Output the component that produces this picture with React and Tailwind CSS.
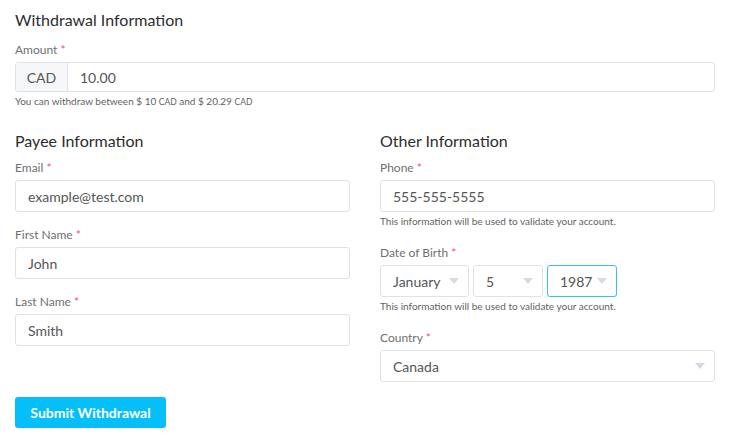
import React from 'react';

const Label = ({ children }) => (
  <div className="h-[16px] text-[12px] leading-[16px] text-[#6f6f73] mb-[4px]">
    {children} <span className="text-[#f0506e]">*</span>
  </div>
);

const TextInput = ({ value }) => (
  <div className="h-[32px] border border-[#dde1ea] rounded-[3px] bg-white px-[12px] flex items-center text-[14px] text-[#555]">
    {value}
  </div>
);

const Caret = () => (
  <svg width="12" height="8" viewBox="0 0 12 8" className="shrink-0">
    <path d="M1 1h10L6 7z" fill="#d6dae3" />
  </svg>
);

const Select = ({ value, className = '', focused = false }) => (
  <div
    className={`h-[32px] border rounded-[3px] bg-white pl-[12px] pr-[8px] flex items-center justify-between text-[14px] text-[#555] ${
      focused ? 'border-[#2ec4f4]' : 'border-[#dde1ea]'
    } ${className}`}
  >
    <span>{value}</span>
    <Caret />
  </div>
);

const Help = ({ children }) => (
  <div className="text-[10px] leading-[14px] text-[#5f5f63] mt-[2px]">{children}</div>
);

export default function App() {
  return (
    <div
      className="w-[740px] h-[443px] bg-white px-[15px] pt-[9px]"
      style={{ fontFamily: 'Lato, "Open Sans", sans-serif' }}
    >
      <div className="w-[700px]">
        {/* Withdrawal */}
        <h2 className="text-[16px] leading-[22px] text-[#2d2d30] mb-[11px]">Withdrawal Information</h2>
        <Label>Amount</Label>
        <div className="h-[30px] flex border border-[#dde1ea] rounded-[3px] text-[14px] text-[#555]">
          <div className="w-[52px] bg-[#f6f7f9] border-r border-[#dde1ea] flex items-center justify-center">CAD</div>
          <div className="flex items-center px-[12px]">10.00</div>
        </div>
        <div className="text-[10px] leading-[14px] text-[#5f5f63] mt-[2px]">
          You can withdraw between $ 10 <span className="text-[8.5px]">CAD</span> and $ 20.29 <span className="text-[8.5px]">CAD</span>
        </div>

        <div className="grid grid-cols-2 gap-[30px] mt-[21px]">
          {/* Payee */}
          <div>
            <h2 className="text-[16px] leading-[22px] text-[#2d2d30] mb-[8px]">Payee Information</h2>
            <Label>Email</Label>
            <TextInput value="example@test.com" />
            <div className="mt-[15px]">
              <Label>First Name</Label>
              <TextInput value="John" />
            </div>
            <div className="mt-[15px]">
              <Label>Last Name</Label>
              <TextInput value="Smith" />
            </div>
            <button className="mt-[51px] w-[151px] h-[31px] rounded-[3px] bg-[#06bff8] text-white text-[14px] font-bold">
              Submit Withdrawal
            </button>
          </div>

          {/* Other */}
          <div>
            <h2 className="text-[16px] leading-[22px] text-[#2d2d30] mb-[8px]">Other Information</h2>
            <Label>Phone</Label>
            <TextInput value="555-555-5555" />
            <Help>This information will be used to validate your account.</Help>
            <div className="mt-[17px]">
              <Label>Date of Birth</Label>
              <div className="flex gap-[4px]">
                <Select value="January" className="w-[89px]" />
                <Select value="5" className="w-[70px]" />
                <Select value="1987" className="w-[70px]" focused />
              </div>
              <Help>This information will be used to validate your account.</Help>
            </div>
            <div className="mt-[17px]">
              <Label>Country</Label>
              <Select value="Canada" />
            </div>
          </div>
        </div>
      </div>
    </div>
  );
}
